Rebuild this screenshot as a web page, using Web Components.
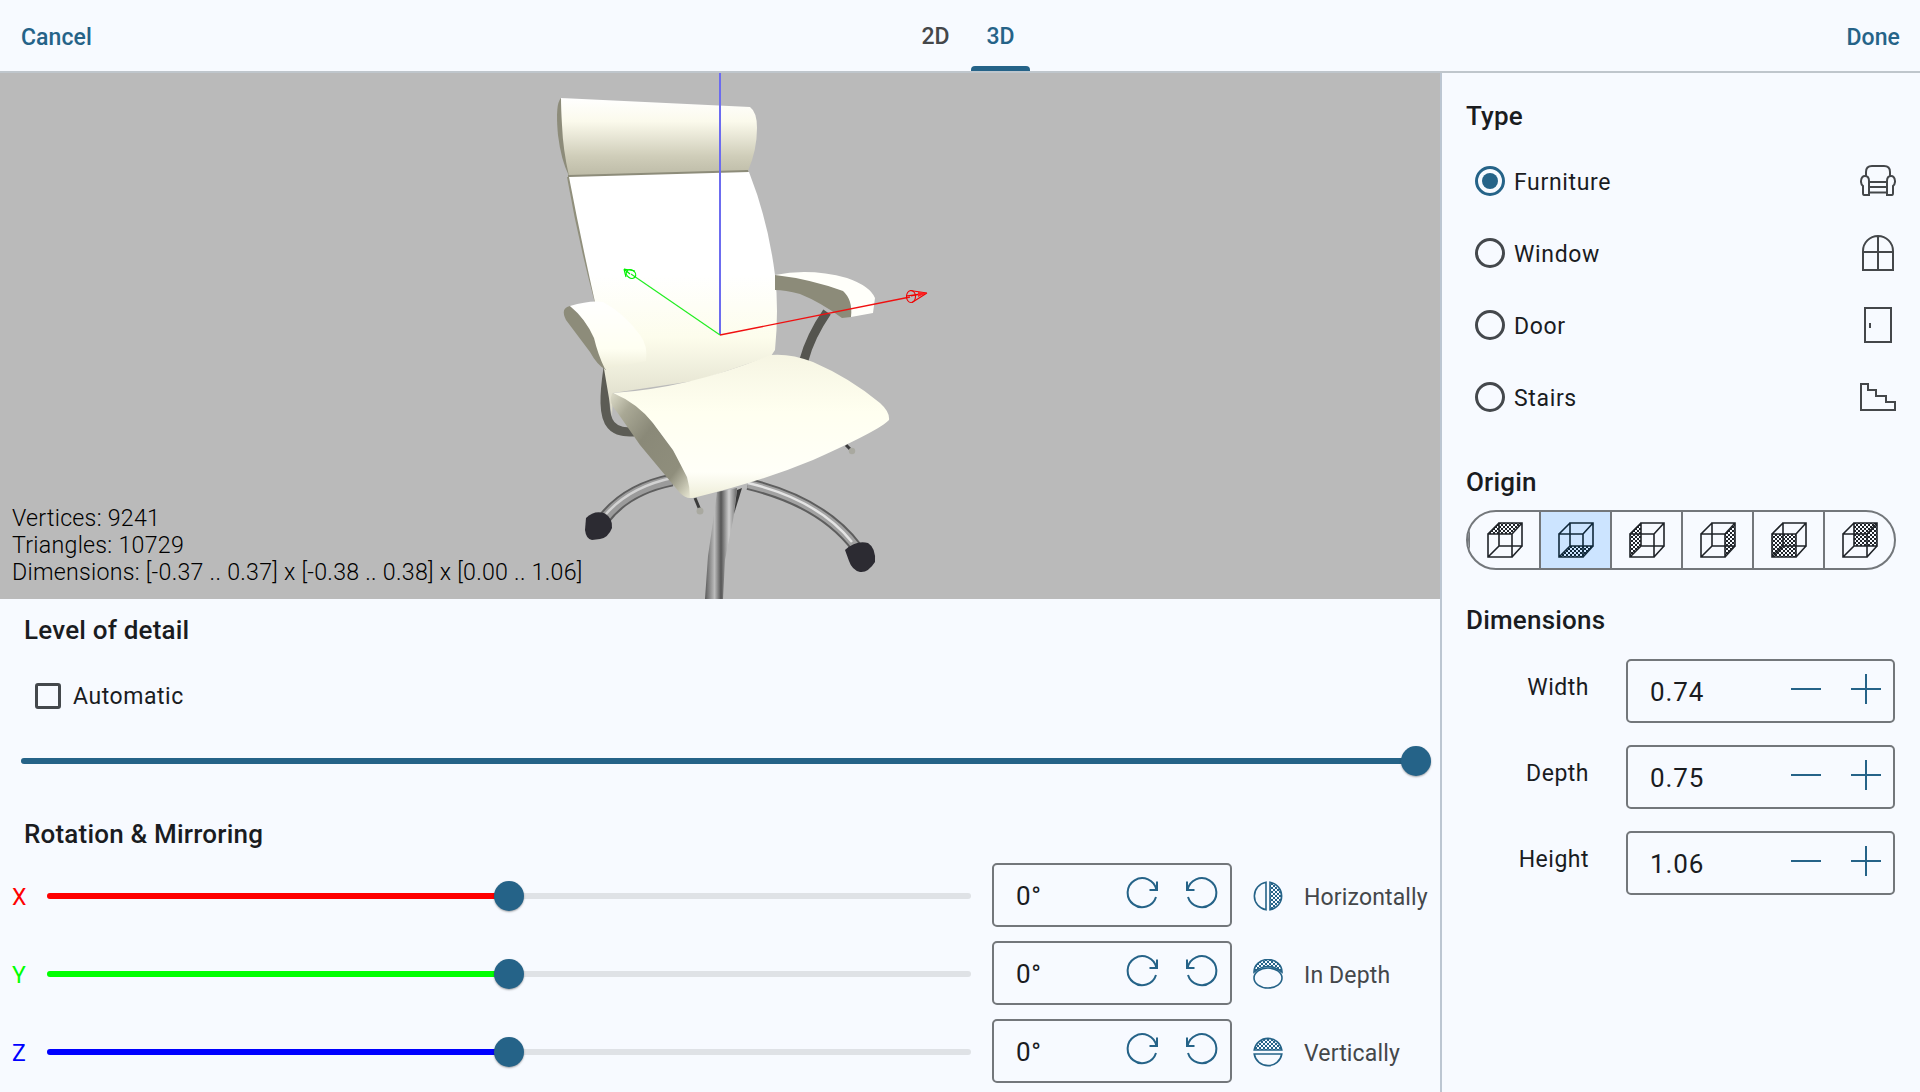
<!DOCTYPE html>
<html>
<head>
<meta charset="utf-8">
<title>Model import</title>
<style>
  html, body { margin: 0; padding: 0; width: 1920px; height: 1092px; overflow: hidden; background: #f7faff; }
</style>
</head>
<body>
<import-screen></import-screen>
<script>
const DOTS = (id, color) => `<pattern id="${id}" width="4" height="4" patternUnits="userSpaceOnUse" stroke="none"><rect x="0" y="0" width="2" height="2" fill="${color}"/><rect x="2" y="2" width="2" height="2" fill="${color}"/></pattern>`;

class TopBar extends HTMLElement {
    connectedCallback() {
        this.attachShadow({ mode: "open" }).innerHTML = `
      <style>
        :host { display: flex; align-items: stretch; justify-content: space-between; height: 71px; border-bottom: 2px solid #bfc6cc; background: #f7faff;
          font: 500 23px Roboto, sans-serif; color: #256388; position: relative; }
        .action { display: flex; align-items: center; padding: 4px 20px 0 21px; letter-spacing: .1px; }
        .tabs { display: flex; position: absolute; left: 906px; top: 0; height: 71px; }
        .tab { width: 59px; margin-right: 6px; display: flex; align-items: center; justify-content: center; color: #44474a; padding-top: 1px; box-sizing: border-box; position: relative; }
        .tab.on { color: #256388; }
        .tab.on::after { content: ""; position: absolute; left: 0; right: 0; bottom: 0; height: 5px; background: #256388; border-radius: 4px 4px 0 0; }
      </style>
      <div class="action">Cancel</div>
      <div class="tabs"><div class="tab">2D</div><div class="tab on">3D</div></div>
      <div class="action">Done</div>`;
    }
}

class ModelViewer extends HTMLElement {
    connectedCallback() {
        this.attachShadow({ mode: "open" }).innerHTML = `
      <style>
        :host { display: block; position: relative; height: 526px; background: #bababa; overflow: hidden; }
        svg { display: block; }
        .stats { position: absolute; left: 12px; bottom: 13px; font: 300 23.2px/27px Roboto, sans-serif; letter-spacing: .26px; color: #000; white-space: nowrap; }
      </style>
      <svg width="1440" height="526" viewBox="0 73 1440 526">
        <defs>
          <linearGradient id="head" x1="0" y1="0" x2="0" y2="1"><stop offset="0" stop-color="#ffffff"/><stop offset=".3" stop-color="#fbfaec"/><stop offset=".75" stop-color="#cfcdb9"/><stop offset="1" stop-color="#bdbba7"/></linearGradient>
          <linearGradient id="back" x1="0" y1="0" x2="0" y2="1"><stop offset="0" stop-color="#ffffff"/><stop offset=".42" stop-color="#ffffff"/><stop offset=".68" stop-color="#fdfdec"/><stop offset="1" stop-color="#d9d7c5"/></linearGradient>
          <linearGradient id="seat" x1="0" y1="0" x2="0" y2="1"><stop offset="0" stop-color="#f6f5e3"/><stop offset=".4" stop-color="#fffff0"/><stop offset=".82" stop-color="#fffff8"/><stop offset="1" stop-color="#eeedd8"/></linearGradient>
          <linearGradient id="side" x1="0" y1="0" x2="1" y2="1"><stop offset="0" stop-color="#dddcc9"/><stop offset=".18" stop-color="#a9a895"/><stop offset=".42" stop-color="#8a8978"/><stop offset=".78" stop-color="#8f8e7c"/><stop offset="1" stop-color="#e8e7d3"/></linearGradient>
          <linearGradient id="arm" x1="0" y1="0" x2="0" y2="1"><stop offset="0" stop-color="#ffffff"/><stop offset=".7" stop-color="#fffff2"/><stop offset="1" stop-color="#eeedd9"/></linearGradient>
          <linearGradient id="steel" x1="0" y1="0" x2="1" y2="0"><stop offset="0" stop-color="#5b5b5b"/><stop offset=".3" stop-color="#bcbcbc"/><stop offset=".5" stop-color="#555"/><stop offset=".75" stop-color="#d0d0d0"/><stop offset="1" stop-color="#666"/></linearGradient>
        </defs>

        <!-- base -->
        <g fill="none">
          <path d="M672 480 C642 486 618 500 603 520" stroke="#5e5e5e" stroke-width="13"/>
          <path d="M672 480 C642 486 618 500 603 520" stroke="#9b9b9b" stroke-width="9"/>
          <path d="M672 478 C644 484 622 496 606 514" stroke="#d2d2d2" stroke-width="2.5"/>
          <path d="M748 484 C790 494 830 512 857 548" stroke="#5e5e5e" stroke-width="12"/>
          <path d="M748 484 C790 494 830 512 857 548" stroke="#a2a2a2" stroke-width="8"/>
          <path d="M748 483 C790 493 826 510 852 542" stroke="#e4e4e4" stroke-width="2.5"/>
        </g>
        <path d="M717 492 L737 488 L733 520 L725 560 L723 599 L705 599 L708 556 L713 522 Z" fill="url(#steel)"/>
        <path d="M737 490 L734 514 L742 488 Z" fill="#3a3a3a"/>
        <path d="M586 518 Q594 510 604 513 Q613 518 612 528 Q608 538 600 539 L592 540 Q586 539 585 530 Z" fill="#2c2b32"/>
        <path d="M845 550 Q856 540 868 543 Q876 548 875 562 Q868 573 860 572 Q852 570 849 561 Z" fill="#2c2b32"/>
        <path d="M695 498 L700 510" stroke="#3c3c3c" stroke-width="3"/>
        <circle cx="700" cy="511" r="3.5" fill="#a9a9a0"/>
        <path d="M846 445 L851 450" stroke="#3c3c3c" stroke-width="3"/>
        <circle cx="852" cy="451" r="3.2" fill="#a9a9a0"/>

        <!-- arm tubes -->
        <path d="M608 368 C604 395 603 416 611 425 C617 432 626 432 634 432" fill="none" stroke="#5c5c55" stroke-width="9"/>
        <path d="M827 312 C816 328 808 345 804 360" fill="none" stroke="#55554f" stroke-width="9"/>

        <!-- headrest -->
        <path d="M561 98 Q555 104 558 135 Q561 160 569 176 L575 176 L570 100 Z" fill="#8d8c7a"/>
        <path d="M561 98 L750 107 Q757 112 757 128 Q757 150 748 171 L569 176 Q563 150 562 125 Q561 108 561 98 Z" fill="url(#head)"/>
        <path d="M569 176 L748 171 L746 172 L569 177 Z" fill="#8d8c7a" stroke="#8d8c7a" stroke-width="2"/>

        <!-- back -->
        <path d="M567 177 Q578 240 595 303 L603 303 L575 177 Z" fill="#908f7c"/>
        <path d="M569 177 L749 172 Q768 220 775 275 Q779 310 775 350 L771 356 L700 380 L613 393 L612 416 L600 345 L595 302 Q581 240 569 177 Z" fill="url(#back)"/>

        <!-- right arm -->
        <path d="M775 275 Q810 274 847 290 Q856 296 851 317 L842 318 Q820 302 800 294 Q785 290 775 290 Z" fill="#8c8b79"/>
        <path d="M775 275 Q810 268 847 278 Q870 286 875 298 L873 313 L851 317 Q853 300 843 291 Q810 279 775 275 Z" fill="#fffffa"/>

        <!-- left arm -->
        <path d="M570 306 Q560 308 566 320 L590 352 Q597 365 606 370 L600 350 Q592 325 570 306 Z" fill="#8d8c7a"/>
        <path d="M570 306 Q590 300 603 302 Q625 314 640 335 Q648 345 646 361 L605 369 Q598 355 594 338 Q585 318 570 306 Z" fill="url(#arm)"/>

        <!-- seat -->
        <path d="M612 393 Q608 403 617 412 L640 445 L680 493 Q685 498 690 498 L690 487 Q684 466 673 450 L653 423 Q640 403 612 393 Z" fill="url(#side)"/>
        <path d="M613 393 Q690 388 770 355 Q790 353 813 362 Q850 378 880 403 Q890 412 889 420 Q880 430 813 460 Q760 482 693 498 L690 498 Q690 487 687 477 L673 450 L653 423 Q637 403 613 393 Z" fill="url(#seat)"/>

        <!-- axes -->
        <line x1="720" y1="73" x2="720" y2="335" stroke="#6c6cf0" stroke-width="2"/>
        <line x1="720" y1="335" x2="631" y2="274" stroke="#22ee22" stroke-width="1.2"/>
        <g fill="none" stroke="#00f000" stroke-width="1.2">
          <ellipse cx="631" cy="274" rx="5" ry="4" transform="rotate(35 631 274)"/>
          <path d="M624 269 L626 277 M624 269 L635 271 M624 269 L630 274"/>
        </g>
        <line x1="720" y1="335" x2="910" y2="297" stroke="#f01010" stroke-width="1.4"/>
        <g fill="none" stroke="#f00000" stroke-width="1.1">
          <ellipse cx="911" cy="296.500" rx="4.500" ry="6"/>
          <path d="M927 293 L910 290.500 M927 293 L912 302.500 M927 293 L906 296 M927 293 L911 296"/>
        </g>
        <path d="M918 292 L927 293 L918 297 Z" fill="#ff2020"/>
      </svg>
      <div class="stats">Vertices: 9241<br>Triangles: 10729<br>Dimensions: [-0.37 .. 0.37] x [-0.38 .. 0.38] x [0.00 .. 1.06]</div>`;
    }
}

class SectionTitle extends HTMLElement {
    connectedCallback() {
        this.attachShadow({ mode: "open" }).innerHTML = `
      <style>
        :host { display: flex; align-items: center; height: 46px; font: 500 26px Roboto, sans-serif; color: #1a1c1f; letter-spacing: .2px; }
      </style><slot></slot>`;
    }
}

class CheckOption extends HTMLElement {
    connectedCallback() {
        this.attachShadow({ mode: "open" }).innerHTML = `
      <style>
        :host { display: flex; align-items: center; gap: 12px; font: 400 23px Roboto, sans-serif; color: #1a1c1f; letter-spacing: .55px; }
        .box { width: 26px; height: 26px; box-sizing: border-box; border: 3px solid #44484c; border-radius: 3px; }
      </style><div class="box"></div><slot></slot>`;
    }
}

class RangeSlider extends HTMLElement {
    get value() { return this.getAttribute("value") || "0"; }
    get color() { return this.getAttribute("color") || "#256388"; }

    connectedCallback() {
        this.attachShadow({ mode: "open" }).innerHTML = `
      <style>
        :host { display: block; position: relative; height: 6px; background: #dfe2e6; border-radius: 3px; }
        .fill { height: 100%; width: ${this.value}; background: ${this.color}; border-radius: 3px; }
        .thumb { position: absolute; left: ${this.value}; top: 50%; width: 30px; height: 30px; margin: -15px 0 0 -15px; border-radius: 50%; background: #256388; box-shadow: 0 1px 2px rgba(0,0,0,.35); }
      </style><div class="fill"></div><div class="thumb"></div>`;
    }
}

class AngleField extends HTMLElement {
    connectedCallback() {
        const turn = (flip) => `<svg width="34" height="34" viewBox="0 0 34 34" fill="none" stroke="#256388" stroke-width="2"${flip ? ' style="transform:scaleX(-1)"' : ""}>
            <path d="M31 21 A14.5 14.5 0 1 1 31.4 14"/><path d="M24.5 14 H32 V5.500"/></svg>`;
        this.attachShadow({ mode: "open" }).innerHTML = `
      <style>
        :host { display: flex; align-items: center; box-sizing: border-box; width: 240px; height: 64px; border: 2px solid #73777b; border-radius: 5px; position: relative; font: 400 26px Roboto, sans-serif; color: #1a1c1f; }
        .val { flex: 1; padding: 2px 0 0 22px; letter-spacing: .6px; }
        .btns { display: flex; gap: 26px; margin-right: 11px; margin-top: -4px; }
        svg { display: block; }
      </style>
      <div class="val"><slot></slot></div><div class="btns">${turn(false)}${turn(true)}</div>`;
    }
}

class MirrorOption extends HTMLElement {
    get kind() { return this.getAttribute("kind"); }

    glyph() {
        const half = `<path d="M13 1.2 A14 14 0 0 0 13 28.8 Z" fill="none"/><path d="M17 1.2 A14 14 0 0 1 17 28.8 Z" fill="url(#m)"/>`;
        if (this.kind === "h") return half;
        if (this.kind === "v") return `<g transform="rotate(-90 15 15)">${half}</g>`;
        return `<ellipse cx="15" cy="19" rx="14" ry="10"/><path d="M1 13 A14 12.5 0 0 1 29 13 Q15 2 1 13 Z" fill="url(#m)"/>`;
    }

    connectedCallback() {
        this.attachShadow({ mode: "open" }).innerHTML = `
      <style>
        :host { display: flex; align-items: center; gap: 21px; font: 400 23px Roboto, sans-serif; color: #44474a; letter-spacing: .15px; white-space: nowrap; }
        svg { display: block; flex: none; }
        .t { padding-top: 2px; }
      </style>
      <svg width="30" height="30" viewBox="0 0 30 30" fill="none" stroke="#256388" stroke-width="1.6">
        <defs>${DOTS("m", "#256388")}</defs>${this.glyph()}
      </svg><div class="t"><slot></slot></div>`;
    }
}

class RadioOption extends HTMLElement {
    connectedCallback() {
        this.attachShadow({ mode: "open" }).innerHTML = `
      <style>
        :host { display: flex; align-items: center; height: 72px; font: 400 23px Roboto, sans-serif; color: #1a1c1f; letter-spacing: .65px; }
        .dot { width: 30px; height: 30px; box-sizing: border-box; border: 3px solid #44484c; border-radius: 50%; margin-right: 9px; display: flex; align-items: center; justify-content: center; }
        :host([checked]) .dot { border-color: #256388; }
        :host([checked]) .dot::after { content: ""; width: 16px; height: 16px; border-radius: 50%; background: #256388; }
        .label { flex: 1; padding-top: 2px; }
        .ico { width: 36px; display: flex; justify-content: center; }
      </style>
      <div class="dot"></div><div class="label"><slot></slot></div><div class="ico"><slot name="icon"></slot></div>`;
    }
}

class OriginPicker extends HTMLElement {
    cube(face, i, on) {
        const c = on ? "#10283a" : "#1f2328";
        const faces = {
            top: "M1 12 L12 1 H35 L25 12 Z",
            bottom: "M1 35 L12 24 H35 L25 35 Z",
            left: "M1 12 L12 1 V24 L1 35 Z",
            right: "M25 12 L35 1 V24 L25 35 Z",
            front: "M1 12 H25 V35 H1 Z",
            back: "M12 1 H35 V24 H12 Z",
        };
        return `<svg width="36" height="36" viewBox="0 0 36 36" fill="none" stroke="${c}" stroke-width="1.6">
          <defs>${DOTS("d" + i, c)}</defs>
          <path d="${faces[face]}" fill="url(#d${i})" stroke="none"/>
          <path d="M1 12 H25 V35 H1 Z M12 1 H35 V24 H12 Z M1 12 L12 1 M25 12 L35 1 M25 35 L35 24 M1 35 L12 24"/>
        </svg>`;
    }

    connectedCallback() {
        const list = ["top", "bottom", "left", "right", "front", "back"];
        const selected = 1;
        this.attachShadow({ mode: "open" }).innerHTML = `
      <style>
        :host { display: flex; box-sizing: border-box; width: 430px; height: 60px; border: 2px solid #73777b; border-radius: 30px; overflow: hidden; }
        .seg { flex: 1; display: flex; align-items: center; justify-content: center; border-left: 2px solid #73777b; }
        .seg:first-child { border-left: 0; flex: 0 0 68px; box-sizing: border-box; }
        .seg.on { background: #cce4ff; }
      </style>
      ${list.map((f, i) => `<div class="seg${i === selected ? " on" : ""}">${this.cube(f, i, i === selected)}</div>`).join("")}`;
    }
}

class DimField extends HTMLElement {
    get label() { return this.getAttribute("label"); }

    connectedCallback() {
        this.attachShadow({ mode: "open" }).innerHTML = `
      <style>
        :host { display: flex; align-items: center; height: 64px; font: 400 23px Roboto, sans-serif; color: #1a1c1f; }
        .name { width: 147px; text-align: right; margin-right: 37px; letter-spacing: .5px; margin-top: -7px; }
        .box { display: flex; align-items: center; box-sizing: border-box; width: 269px; height: 100%; border: 2px solid #73777b; border-radius: 5px; }
        .val { flex: 1; padding-left: 22px; font-size: 26px; letter-spacing: .9px; margin-top: 2px; }
        .btns { display: flex; gap: 30px; margin-right: 12px; margin-top: -4px; }
        svg { display: block; }
      </style>
      <div class="name">${this.label}</div>
      <div class="box">
        <div class="val"><slot></slot></div>
        <div class="btns">
          <svg width="30" height="30" viewBox="0 0 30 30" stroke="#256388" stroke-width="2"><path d="M0 15 H30"/></svg>
          <svg width="30" height="30" viewBox="0 0 30 30" stroke="#256388" stroke-width="2"><path d="M0 15 H30 M15 0 V30"/></svg>
        </div>
      </div>`;
    }
}

class ImportScreen extends HTMLElement {
    row(axis, color, kind, name) {
        return `<div class="rot">
          <div class="axis" style="color:${color}">${axis}</div>
          <range-slider value="50%" color="${color}"></range-slider>
          <angle-field>0°</angle-field>
          <mirror-option kind="${kind}">${name}</mirror-option>
        </div>`;
    }

    connectedCallback() {
        const gr = `fill="none" stroke="#44474a" stroke-width="2"`;
        this.attachShadow({ mode: "open" }).innerHTML = `
      <style>
        :host { display: block; width: 1920px; height: 1092px; font-family: Roboto, sans-serif; background: #f7faff; overflow: hidden; }
        .main { display: grid; grid-template-columns: 1440px 480px; height: 1019px; }
        .left { display: flex; flex-direction: column; }
        .lod { margin: 8px 0 0 24px; }
        check-option { margin: 30px 0 0 35px; height: 26px; }
        .lodslider { margin: 49px 24px 0 21px; }
        .rtitle { margin: 47px 0 0 24px; }
        .rot { display: grid; grid-template-columns: 47px 924px 261px auto; height: 78px; align-items: center; font: 400 23px Roboto, sans-serif; }
        .axis { padding-left: 12px; margin-top: 3px; }
        .rot angle-field { margin-left: 21px; margin-top: -2px; }
        .rot mirror-option { margin-left: 21px; }
        .rot range-slider { margin-top: -1px; }
        .right { border-left: 2px solid #bcc6d2; padding: 15px 24px 0 0; display: flex; flex-direction: column; }
        .right section-title { margin-left: 24px; }
        radio-option { margin-left: 33px; }
        .otitle { margin-top: 26px; }
        origin-picker { margin: 5px 0 0 24px; }
        .right .dtitle { margin-top: 27px; margin-bottom: 16px; }
        dim-field { margin-bottom: 22px; }
        svg { display: block; }
      </style>
      <top-bar></top-bar>
      <div class="main">
        <div class="left">
          <model-viewer></model-viewer>
          <section-title class="lod">Level of detail</section-title>
          <check-option>Automatic</check-option>
          <range-slider class="lodslider" value="100%" color="#256388"></range-slider>
          <section-title class="rtitle">Rotation &amp; Mirroring</section-title>
          ${this.row("X", "#ff0000", "h", "Horizontally")}
          ${this.row("Y", "#00ff00", "d", "In Depth")}
          ${this.row("Z", "#0000ff", "v", "Vertically")}
        </div>
        <div class="right">
          <section-title style="height:56px">Type</section-title>
          <radio-option style="margin-top:1px" checked>Furniture
            <svg slot="icon" width="36" height="32" viewBox="0 0 36 32" ${gr}>
              <path d="M6 11 V7 Q6 1 12 1 H24 Q30 1 30 7 V11"/>
              <path d="M9 20 V30 H4 Q3 30 3 28 V21 Q.8 19 1 16 Q1.5 11 5 11 Q9 11 9 16 Z"/>
              <path d="M27 20 V30 H32 Q33 30 33 28 V21 Q35.2 19 35 16 Q34.5 11 31 11 Q27 11 27 16 Z"/>
              <path d="M9 17 H27 M9 22 H27 M9 27.5 H27"/>
            </svg>
          </radio-option>
          <radio-option>Window
            <svg slot="icon" width="32" height="36" viewBox="0 0 32 36" ${gr}>
              <path d="M1 35 V16 A15 15 0 0 1 31 16 V35 Z M16 1 V35 M1 17 H31"/>
            </svg>
          </radio-option>
          <radio-option>Door
            <svg slot="icon" width="28" height="36" viewBox="0 0 28 36" ${gr}>
              <path d="M1 1 H27 V35 H1 Z M6 16 V21"/>
            </svg>
          </radio-option>
          <radio-option>Stairs
            <svg slot="icon" width="36" height="28" viewBox="0 0 36 28" ${gr}>
              <path d="M1 1 H8 V7 H16 V13 H26 V19 H35 V27 H1 Z"/>
            </svg>
          </radio-option>
          <section-title class="otitle">Origin</section-title>
          <origin-picker></origin-picker>
          <section-title class="dtitle">Dimensions</section-title>
          <dim-field label="Width">0.74</dim-field>
          <dim-field label="Depth">0.75</dim-field>
          <dim-field label="Height">1.06</dim-field>
        </div>
      </div>`;
    }
}

customElements.define("top-bar", TopBar);
customElements.define("model-viewer", ModelViewer);
customElements.define("section-title", SectionTitle);
customElements.define("check-option", CheckOption);
customElements.define("range-slider", RangeSlider);
customElements.define("angle-field", AngleField);
customElements.define("mirror-option", MirrorOption);
customElements.define("radio-option", RadioOption);
customElements.define("origin-picker", OriginPicker);
customElements.define("dim-field", DimField);
customElements.define("import-screen", ImportScreen);
</script>
</body>
</html>
